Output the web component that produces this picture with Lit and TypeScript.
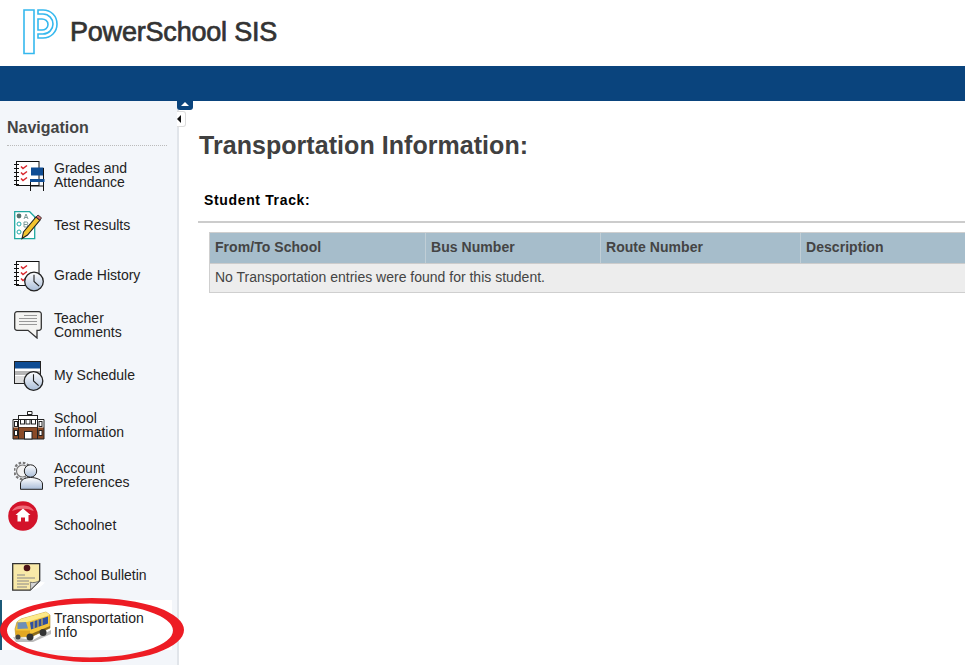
import { LitElement, html, css, svg } from "lit";
import { customElement } from "lit/decorators.js";

const clock = (cx: number, cy: number, r: number) => svg`
  <circle cx=${cx} cy=${cy} r=${r} fill="url(#clk)" stroke="#222" stroke-width="1.3"/>
  <path d="M${cx} ${cy - r + 2.5}V${cy}L${cx + r * 0.55} ${cy + r * 0.5}" fill="none" stroke="#222" stroke-width="1.1"/>`;

const notebook = svg`
  <rect x="2.500" y="0.500" width="22.500" height="24" fill="#fff" stroke="#111"/>
  <path d="M0 3.500h5M0 7.500h5M0 11.500h5M0 15.500h5M0 19.500h5M0 23.500h5" stroke="#111"/>`;

const checks = svg`<path d="M7 5.500l2 2 4-3M7 11.500l2 2 4-3M7 17.500l2 2 4-3" fill="none" stroke="#d8262c" stroke-width="1.500"/>`;

const icons: Record<string, unknown> = {
  grades: svg`<svg class="ic" style="left:14px;top:11px" width="32" height="31" viewBox="0 0 32 31">
    ${notebook}${checks}
    <rect x="17" y="6.500" width="12.500" height="8" fill="#0f4d94"/>
    <rect x="16" y="18" width="14.500" height="3" fill="#0f4d94"/>
    <path d="M16.500 21v9M29.500 21v9M16.500 25h13M29.500 7v11" stroke="#111" fill="none"/>
    </svg>`,
  test: svg`<svg class="ic" style="left:14px;top:11px" width="28" height="30" viewBox="0 0 28 30">
    <path d="M0.700 0.700h15l5 5v22H0.700z" fill="#fff" stroke="#20a8a0" stroke-width="1.300"/>
    <circle cx="5" cy="5" r="2.400" fill="#55706c"/>
    <circle cx="5" cy="13" r="2" fill="none" stroke="#2aa"/>
    <circle cx="5" cy="21" r="2" fill="none" stroke="#2aa"/>
    <path d="M10 8l2-5 2 5M11 6.500h2M10 11v5h2.500a1.200 1.200 0 0 0 0-2.500H10h2.500a1.200 1.200 0 0 0 0-2.500z" fill="none" stroke="#7d9a98" stroke-width="1"/>
    <path d="M8 27.500l1.500-6.500L22 6l4 3.200L13.500 24z" fill="#f4c430" stroke="#222" stroke-width="1.100"/>
    <path d="M22 6l2-2 3.500 2.800L26 9.200z" fill="#d56a6a" stroke="#222" stroke-width="0.800"/>
    </svg>`,
  history: svg`<svg class="ic" style="left:14px;top:11px" width="31" height="31" viewBox="0 0 31 31">
    ${notebook}${checks}${clock(20, 20.5, 9.3)}</svg>`,
  comments: svg`<svg class="ic" style="left:14px;top:11px" width="29" height="28" viewBox="0 0 29 28">
    <path d="M3 0.700h22a2.300 2.300 0 0 1 2.300 2.300v14a2.300 2.300 0 0 1-2.300 2.300h-2v7.700l-9-7.700H3A2.300 2.300 0 0 1 0.700 17V3A2.300 2.300 0 0 1 3 0.700z" fill="#f4f4f2" stroke="#333" stroke-width="1.300"/>
    <path d="M10 4.500h13M5 7.500h18M5 10.500h18M5 13.500h18" stroke="#999"/></svg>`,
  schedule: svg`<svg class="ic" style="left:14px;top:11px" width="31" height="31" viewBox="0 0 31 31">
    <rect x="0.500" y="0.500" width="26" height="22" fill="#fff" stroke="#222"/>
    <rect x="1" y="1" width="25" height="6.500" fill="#0f4d94"/>
    <rect x="1" y="10" width="25" height="4" fill="#b5b5b5"/>
    <rect x="1" y="15" width="25" height="7" fill="#dedede"/>
    ${clock(19.5, 20, 9.3)}</svg>`,
  school: svg`<svg class="ic" style="left:12px;top:11px" width="33" height="29" viewBox="0 0 33 29">
    <path d="M15.500 5V0.500h4.500v3h-4.500" fill="#fff" stroke="#222"/>
    <rect x="1" y="8.500" width="31" height="19.500" fill="#fff"/>
    <rect x="6.500" y="4.500" width="19" height="12" fill="#fff" stroke="#222"/>
    <rect x="1" y="16.500" width="31" height="11.500" fill="#8a4a26"/>
    <path d="M1 8.500h31v19.500H1z" fill="none" stroke="#222"/>
    <rect x="8.500" y="8.500" width="4" height="4.500" fill="#fff" stroke="#222"/>
    <rect x="14" y="8.500" width="4" height="4.500" fill="#fff" stroke="#222"/>
    <rect x="19.500" y="8.500" width="4" height="4.500" fill="#fff" stroke="#222"/>
    <rect x="2.500" y="10.500" width="3" height="5" fill="#fff" stroke="#222"/>
    <rect x="27" y="10.500" width="3" height="5" fill="#fff" stroke="#222"/>
    <rect x="2.500" y="19.500" width="3" height="5" fill="#fff" stroke="#222"/>
    <rect x="27" y="19.500" width="3" height="5" fill="#fff" stroke="#222"/>
    <rect x="12.500" y="20.500" width="7.500" height="7.500" fill="#fff" stroke="#222"/>
    <path d="M6.500 16.500v11.500M25.500 16.500v11.500" stroke="#222"/></svg>`,
  account: svg`<svg class="ic" style="left:14px;top:11px" width="30" height="29" viewBox="0 0 30 29">
    <circle cx="8.500" cy="10" r="8.200" fill="none" stroke="#777" stroke-width="2.200" stroke-dasharray="2.600 1.700"/>
    <circle cx="8.500" cy="10" r="6" fill="#f2f2f2" stroke="#777" stroke-width="1.200"/>
    <path d="M6.500 28.300v-5.300c0-4 4-6.500 10-6.500s12 2.500 12 6.500v5.300z" fill="url(#clk)" stroke="#222"/>
    <circle cx="16.500" cy="10" r="6.200" fill="url(#clk)" stroke="#222"/></svg>`,
  net: svg`<svg class="ic" style="left:8px;top:1px" width="30" height="30" viewBox="0 0 30 30">
    <circle cx="15" cy="15" r="14.800" fill="#d3132a"/>
    <path d="M4 10a12 9 0 0 1 22 0a20 12 0 0 0-22 0z" fill="#ef6a78"/>
    <path d="M15 7.500l7.500 6.500h-2v6.500h-3.500v-4h-4v4H9.500V14h-2z" fill="#fff"/></svg>`,
  bulletin: svg`<svg class="ic" style="left:12px;top:13px" width="33" height="28" viewBox="0 0 33 28">
    <path d="M18 27.500c3-1 10-2 15-8l-5-1z" fill="#fff"/>
    <path d="M0.700 0.700h27v17l-9.500 9.500H0.700z" fill="#f8e9a8" stroke="#333" stroke-width="1.300"/>
    <path d="M18.200 27.200c1-4 0-8 0-8 3 1 7 0 9.500-1.500z" fill="#d6d6d6" stroke="#555" stroke-width="0.800"/>
    <path d="M5 12h8M5 15h18M5 18h12M5 21h12M5 24h10" stroke="#888" stroke-width="1.200"/>
    <circle cx="15" cy="5" r="3.300" fill="#4c1216"/></svg>`,
  bus: svg`<svg class="ic" style="left:13px;top:11px" width="38" height="31" viewBox="0 0 38 31">
    <path d="M0 26l20 3 18-10v4L20 31H3z" fill="#bbb"/>
    <path d="M4 11L8 8 33 1l4 3v13L20 25 3 26.500 2 18z" fill="#f5c53a" stroke="#9a7414" stroke-width="0.500"/>
    <path d="M8 8L33 1l4 3-23 7-10 0z" fill="#fde98a"/>
    <path d="M4.500 11.500l8.500-.5 2 6.500-10.500.5z" fill="#6f8fb8"/>
    <path d="M17 11.500l18-6v7l-17 6z" fill="#2f4fa0"/>
    <path d="M21 10v7.500M25 9v7M29 7.500v7" stroke="#f5c53a"/>
    <path d="M2.500 19.500H17v6H3z" fill="#e3a722"/>
    <path d="M18 23l19-8v2L20 25z" fill="#8a6a1c"/>
    <circle cx="17" cy="26" r="3.500" fill="#333"/><circle cx="30" cy="21.500" r="3.500" fill="#333"/><circle cx="5" cy="26" r="2.500" fill="#444"/>
    </svg>`,
};

const items = [
  ["grades", ["Grades and", "Attendance"]],
  ["test", ["Test Results"]],
  ["history", ["Grade History"]],
  ["comments", ["Teacher", "Comments"]],
  ["schedule", ["My Schedule"]],
  ["school", ["School", "Information"]],
  ["account", ["Account", "Preferences"]],
  ["net", ["Schoolnet"]],
  ["bulletin", ["School Bulletin"]],
  ["bus", ["Transportation", "Info"]],
] as [string, string[]][];

@customElement("app-root")
export class AppRoot extends LitElement {
  static styles = css`
    :host { display: block; width: 965px; height: 665px; overflow: hidden; position: relative; background: #fff;
      font-family: "Liberation Sans", Arial, sans-serif; }
    .defs { position: absolute; width: 0; height: 0; }
    header { height: 66px; display: flex; align-items: flex-start; padding: 9px 0 0 23px; box-sizing: border-box; gap: 12px; }
    .brand { font-size: 27px; line-height: 30px; color: #333; margin-top: 8px; letter-spacing: -0.2px; -webkit-text-stroke: 0.7px #333; }
    .bar { height: 35px; background: #0a447d; }
    .body { display: flex; height: 564px; }
    nav { width: 177px; background: #f3f6fa; border-right: 2px solid #e1e5ea; flex: none; position: relative; }
    h2 { font-size: 16px; line-height: 18px; color: #444; font-weight: bold; padding: 18px 0 0; margin: 0 10px 0 7px; border-bottom: 1px dotted #bbb; height: 26px; box-sizing: content-box; }
    ul { list-style: none; margin: 4px 0 0; padding: 0; }
    li { height: 50px; position: relative; display: flex; align-items: center; padding-left: 54px; font-size: 14px; line-height: 14px; color: #222; box-sizing: border-box; }
    li.on { background: #fff; border-left: 2px solid #1c5a78; padding-left: 52px; width: 172px; }
    li.on .ic { margin-left: -2px; }
    .ic { position: absolute; }
    .up { position: absolute; left: 177px; top: 0; width: 16px; height: 9px; background: #0a447d; border-radius: 0 0 3px 3px; display: flex; justify-content: center; padding-top: 1px; box-sizing: border-box; }
    .up i { border: 4px solid transparent; border-top: 0; border-bottom: 4px solid #fff; width: 0; height: 0; }
    .left { position: absolute; left: 177px; top: 10px; width: 8.500px; height: 16px; background: #fff; border: 1px solid #dcdcdc; border-left: 0; border-radius: 0 3px 3px 0; box-sizing: border-box; display: flex; align-items: center; }
    .left i { border: 4px solid transparent; border-left: 0; border-right: 4px solid #111; width: 0; height: 0; }
    main { flex: 1; min-width: 0; padding: 30px 0 0 20px; }
    h1 { margin: 0; font-size: 25px; line-height: 28px; color: #404040; font-weight: bold; letter-spacing: 0.05px; }
    .track { font-size: 14px; line-height: 16px; font-weight: bold; color: #000; margin: 33px 0 0 5px; letter-spacing: 0.65px; }
    .rule { height: 2px; background: #ccc; margin: 13px -10px 0 -1px; }
    .tbl { margin: 9px -10px 0 10px; border: 1px solid #cfcfcf; border-right: 0; background: #ededed; }
    .hd { display: flex; height: 30px; background: #a6bdcb; border-bottom: 1px solid #ccc; font-size: 14px; font-weight: bold; color: #444; line-height: 28px; letter-spacing: 0.05px; }
    .hd div { padding-left: 5px; border-right: 1px solid #c0ced6; box-sizing: border-box; flex: none; }
    .row { height: 28px; line-height: 26px; font-size: 14px; color: #444; padding-left: 5px; }
    .oval { position: absolute; left: 0; top: 595px; pointer-events: none; }
  `;

  render() {
    return html`
      <svg class="defs"><defs><linearGradient id="clk" x1="0" y1="0" x2="0" y2="1">
        <stop offset="0" stop-color="#fff"/><stop offset="1" stop-color="#a9bdd8"/></linearGradient></defs></svg>
      <header>
        <svg width="35" height="46" viewBox="0 0 35 46" fill="none" stroke="#35b8ee" stroke-width="1.600">
          <path d="M1 1H11V44.500H1z"/>
          <path d="M15 1H20C28 1 34 7 34 15S28 29 20 29H15V25H20C26 25 30 20 30 15S26 5 20 5H15z"/>
          <path d="M15 10H19C22 10 25 12 25 15.500S22 21 19 21H15z"/>
        </svg>
        <div class="brand">PowerSchool SIS</div>
      </header>
      <div class="bar"></div>
      <div class="body">
        <nav>
          <h2>Navigation</h2>
          <ul>
            ${items.map(([k, t], i) => html`<li class="${i === 9 ? "on" : ""}">
              ${icons[k]}
              <span>${t.map((l) => html`${l}<br />`)}</span></li>`)}
          </ul>
          <div class="up"><i></i></div>
          <div class="left"><i></i></div>
        </nav>
        <main>
          <h1>Transportation Information:</h1>
          <div class="track">Student Track:</div>
          <div class="rule"></div>
          <div class="tbl">
            <div class="hd">
              <div style="width:216px">From/To School</div>
              <div style="width:175px">Bus Number</div>
              <div style="width:200px">Route Number</div>
              <div style="width:200px">Description</div>
            </div>
            <div class="row">No Transportation entries were found for this student.</div>
          </div>
        </main>
      </div>
      <svg class="oval" width="190" height="70" viewBox="0 0 190 70">
        <path fill-rule="evenodd" fill="#ed1c24" d="M0 35a92 32 0 1 0 184 0a92 32 0 1 0-184 0zM7 35.500a83 27 0 1 0 166 0a83 27 0 1 0-166 0z"/>
      </svg>
    `;
  }
}
